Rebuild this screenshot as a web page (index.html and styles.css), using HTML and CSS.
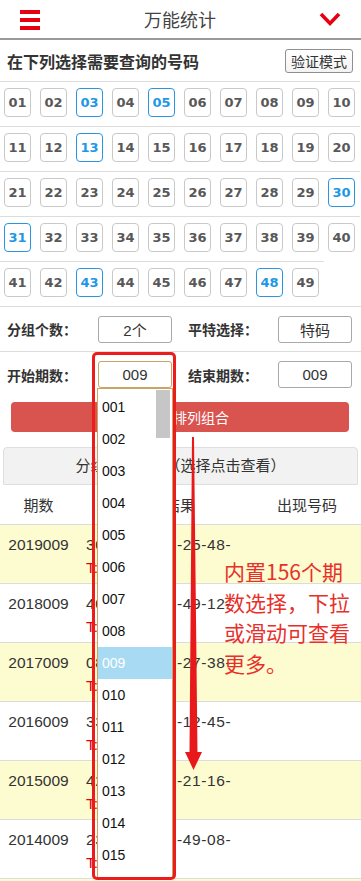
FILE: index.html
```html
<!DOCTYPE html>
<html lang="zh-CN">
<head>
<meta charset="utf-8">
<title>万能统计</title>
<link rel="stylesheet" href="styles.css">
</head>
<body>
<header class="topbar">
  <span class="menu"><i></i><i></i><i></i></span>
  <h1 class="title">万能统计</h1>
  <svg class="chev" width="24" height="16" viewBox="0 0 24 16"><polyline points="3,2 12,11.5 21,2" fill="none" stroke="#e60012" stroke-width="3.6"/></svg>
</header>

<div class="pick-head">
  <h2>在下列选择需要查询的号码</h2>
  <button class="verify">验证模式</button>
</div>

<ul class="nums">
  <li><span class="ball">01</span></li><li><span class="ball">02</span></li><li><span class="ball on">03</span></li><li><span class="ball">04</span></li><li><span class="ball on">05</span></li><li><span class="ball">06</span></li><li><span class="ball">07</span></li><li><span class="ball">08</span></li><li><span class="ball">09</span></li><li><span class="ball">10</span></li>
  <li><span class="ball">11</span></li><li><span class="ball">12</span></li><li><span class="ball on">13</span></li><li><span class="ball">14</span></li><li><span class="ball">15</span></li><li><span class="ball">16</span></li><li><span class="ball">17</span></li><li><span class="ball">18</span></li><li><span class="ball">19</span></li><li><span class="ball">20</span></li>
  <li><span class="ball">21</span></li><li><span class="ball">22</span></li><li><span class="ball">23</span></li><li><span class="ball">24</span></li><li><span class="ball">25</span></li><li><span class="ball">26</span></li><li><span class="ball">27</span></li><li><span class="ball">28</span></li><li><span class="ball">29</span></li><li><span class="ball on">30</span></li>
  <li><span class="ball on">31</span></li><li><span class="ball">32</span></li><li><span class="ball">33</span></li><li><span class="ball">34</span></li><li><span class="ball">35</span></li><li><span class="ball">36</span></li><li><span class="ball">37</span></li><li><span class="ball">38</span></li><li><span class="ball">39</span></li><li><span class="ball">40</span></li>
  <li><span class="ball">41</span></li><li><span class="ball">42</span></li><li><span class="ball on">43</span></li><li><span class="ball">44</span></li><li><span class="ball">45</span></li><li><span class="ball">46</span></li><li><span class="ball">47</span></li><li><span class="ball on">48</span></li><li><span class="ball">49</span></li>
</ul>

<div class="opts">
  <div class="opt-row">
    <span class="lbl">分组个数：</span><span class="sel">2个</span>
    <span class="lbl lbl2">平特选择：</span><span class="sel">特码</span>
  </div>
  <div class="opt-row last">
    <span class="lbl">开始期数：</span><span class="sel focus">009</span>
    <span class="lbl lbl2">结束期数：</span><span class="sel">009</span>
  </div>
</div>

<button class="go">号码全排列组合</button>

<div class="bar">分组结果列表（选择点击查看）</div>

<table class="res">
  <colgroup><col class="c1"><col class="c2"><col class="c3"></colgroup>
  <thead><tr><th>期数</th><th>开奖结果</th><th>出现号码</th></tr></thead>
  <tbody>
    <tr class="y"><td>2019009</td><td><span class="n">30-05-13-43-25-48-</span><span class="t">T:31</span></td><td></td></tr>
    <tr><td>2018009</td><td><span class="n">40-31-03-05-49-12-</span><span class="t">T:13</span></td><td></td></tr>
    <tr class="y"><td>2017009</td><td><span class="n">08-30-48-13-27-38-</span><span class="t">T:43</span></td><td></td></tr>
    <tr><td>2016009</td><td><span class="n">33-05-43-31-12-45-</span><span class="t">T:03</span></td><td></td></tr>
    <tr class="y"><td>2015009</td><td><span class="n">42-30-13-48-21-16-</span><span class="t">T:05</span></td><td></td></tr>
    <tr><td>2014009</td><td><span class="n">23-31-03-43-49-08-</span><span class="t">T:30</span></td><td></td></tr>
    <tr class="y"><td></td><td></td><td></td></tr>
  </tbody>
</table>

<div class="dropdown">
  <ul>
    <li>001</li><li>002</li><li>003</li><li>004</li><li>005</li><li>006</li><li>007</li><li>008</li>
    <li class="hl">009</li><li>010</li><li>011</li><li>012</li><li>013</li><li>014</li><li>015</li>
  </ul>
  <span class="thumb"></span>
</div>

<div class="mark"></div>

<svg class="arrow" width="22" height="340" viewBox="0 0 22 340"><polygon points="9,2 11,2 14.5,317 19,317 10.5,335 2,317 6.5,317" fill="#e8191a"/></svg>

<p class="note">内置156个期<br>数选择，下拉<br>或滑动可查看<br>更多。</p>
</body>
</html>
```

FILE: styles.css
```css
* { box-sizing: border-box; }
body {
  margin: 0;
  width: 361px;
  position: relative;
  background: #fff;
  font-family: "Liberation Sans", "Noto Sans CJK SC", sans-serif;
  color: #333;
}
.topbar {
  height: 40px;
  border-bottom: 2px solid #9a9a9a;
  display: flex;
  align-items: center;
  justify-content: space-between;
  padding: 0 19px 0 20px;
}
.menu { display: flex; flex-direction: column; gap: 4px; width: 20px; margin-top: 2px; }
.menu i { display: block; height: 4px; background: #e60012; }
.title {
  margin: 0;
  font-size: 18px;
  font-weight: normal;
  color: #444;
  margin-left: 2px;
}
.chev { display: block; margin-top: 2px; }

.pick-head {
  height: 41px;
  display: flex;
  align-items: center;
  justify-content: space-between;
  padding: 1px 8px 0 7px;
}
.pick-head h2 { margin: 0; font-size: 16px; font-weight: bold; color: #333; }
.verify {
  height: 24px;
  width: 68px;
  padding: 0;
  border: 1px solid #8f8f8f;
  border-radius: 3px;
  background: linear-gradient(#fff, #f3f3f3);
  font: 14px "Noto Sans CJK SC", sans-serif;
  color: #333;
}

.nums {
  list-style: none;
  margin: 0;
  padding: 0;
  display: flex;
  flex-wrap: wrap;
}
.nums li {
  width: 36px;
  height: 45px;
  border-top: 1px solid #dcdcdc;
  padding: 6px 0 0 4px;
}
.ball {
  display: flex;
  align-items: center;
  justify-content: center;
  width: 27px;
  height: 29px;
  border: 1px solid #c9c9c9;
  border-radius: 4px;
  font: bold 13px "DejaVu Sans", sans-serif;
  color: #585858;
}
.ball.on { border-color: #2a95e0; color: #1e98e6; }

.opts { border-top: 1px solid #dcdcdc; }
.opt-row {
  height: 45px;
  display: grid;
  grid-template-columns: 91px 74px 106px 74px;
  align-items: center;
  padding-left: 7px;
  border-bottom: 1px solid #dcdcdc;
}
.opt-row.last { border-bottom: none; }
.lbl { font-size: 14px; font-weight: bold; color: #333; }
.lbl2 { padding-left: 16px; }
.sel {
  height: 27px;
  border: 1px solid #a9a9a9;
  border-radius: 3px;
  display: flex;
  align-items: center;
  justify-content: center;
  font-size: 15px;
  color: #333;
}
.sel.focus { border: 1.5px solid #c9a462; }

.go {
  display: block;
  width: 338px;
  height: 30px;
  margin: 5px 0 0 11px;
  border: none;
  border-radius: 4px;
  background: #d9534f;
  color: #fff;
  font: 14px "Noto Sans CJK SC", sans-serif;
}

.bar {
  margin: 15px 3px 0;
  height: 38px;
  border: 1px solid #dedede;
  border-radius: 4px 4px 0 0;
  background: #f2f2f2;
  text-align: center;
  line-height: 36px;
  font-size: 15px;
  color: #333;
}

.res { width: 361px; border-collapse: collapse; table-layout: fixed; }
.c1 { width: 77px; }
.c2 { width: 176px; }
.c3 { width: 108px; }
.res th {
  height: 39px;
  font-weight: normal;
  font-size: 15px;
  color: #333;
  border-bottom: 1px solid #dcdcdc;
  padding: 0;
}
.res td {
  height: 59px;
  vertical-align: top;
  padding: 8px 0 0;
  font-size: 15.5px;
  line-height: 23px;
  color: #333;
  border-bottom: 1px solid #dcdcdc;
}
.res td:first-child { text-align: center; }
.res td:nth-child(2) { padding-left: 9px; }
.res tr.y td { background: #fdfbd0; }
.n { display: block; white-space: nowrap; letter-spacing: 0.6px; }
.t { display: block; color: #e8000d; }

.dropdown {
  position: absolute;
  left: 97px;
  top: 388px;
  width: 76px;
  height: 490px;
  border: 1px solid #c9a462;
  background: #fff;
  overflow: hidden;
}
.dropdown ul { list-style: none; margin: 0; padding: 2px 0 0; }
.dropdown li {
  height: 32px;
  line-height: 32px;
  padding-left: 4px;
  font-size: 14px;
  color: #111;
}
.dropdown li.hl { background: #a9daf3; color: #fff; }
.thumb {
  position: absolute;
  left: 58px;
  top: 1px;
  width: 14px;
  height: 48px;
  background: #c6c6c6;
}

.mark {
  position: absolute;
  left: 92px;
  top: 352px;
  width: 84px;
  height: 528px;
  border: 3.5px solid #ec1c1c;
  border-radius: 5px;
}
.arrow { position: absolute; left: 183px; top: 435px; }
.note {
  position: absolute;
  left: 224px;
  top: 556px;
  margin: 0;
  font: 21px/30.5px "Noto Sans CJK SC", sans-serif;
  color: #e8302a;
  white-space: nowrap;
}
```
